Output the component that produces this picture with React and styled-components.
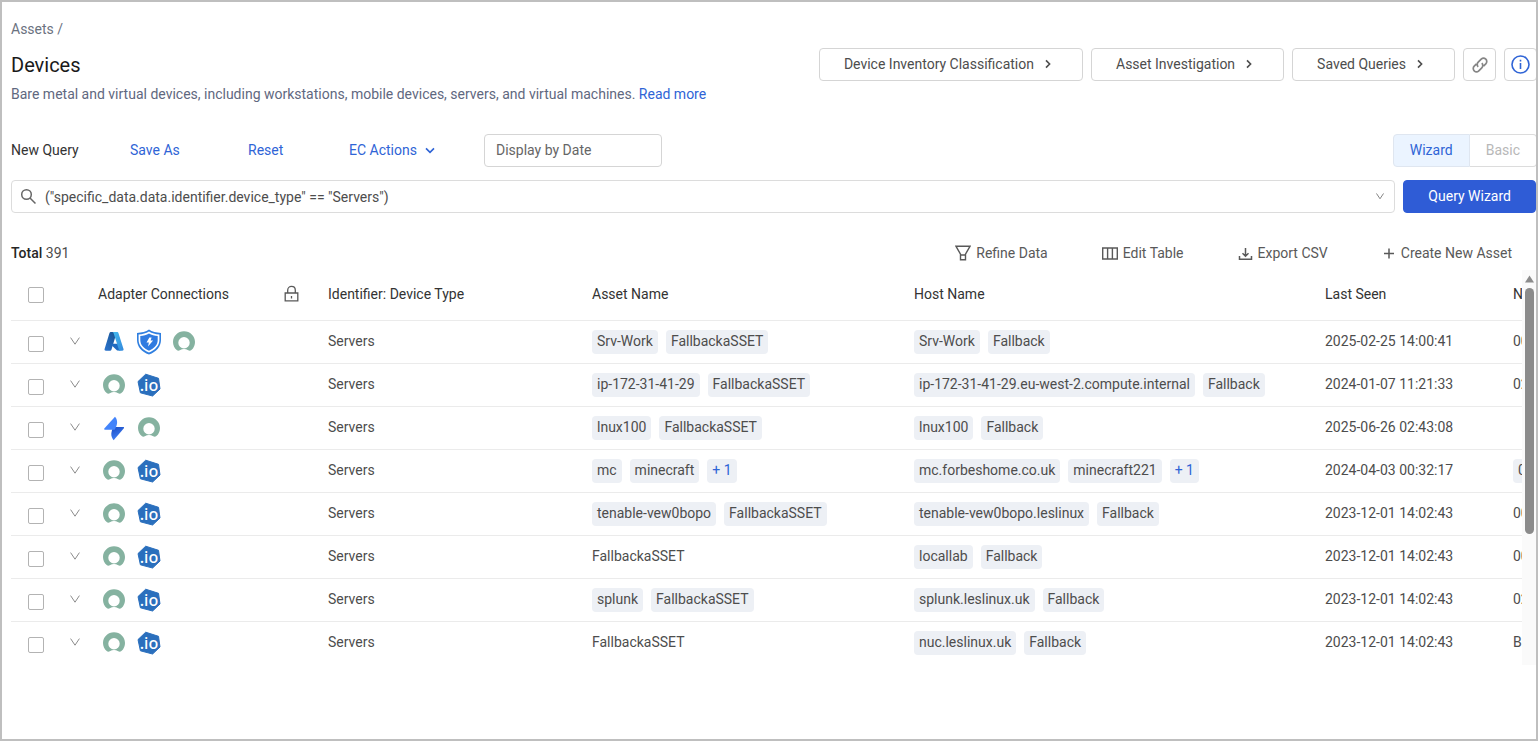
import React from "react";
import styled, { createGlobalStyle } from "styled-components";

const GlobalStyle = createGlobalStyle`
  * {
    box-sizing: border-box;
  }
  body {
    margin: 0;
    background: #ffffff;
    font-family: Roboto, "Open Sans", sans-serif;
    font-size: 14px;
    line-height: 20px;
    color: #4d4d4d;
  }
  button, input {
    font: inherit;
    color: inherit;
  }
`;

const columns = ["Adapter Connections", "Identifier: Device Type", "Asset Name", "Host Name", "Last Seen", "Network"];

const rows = [
  { adapters: ["azure", "shield", "ring"], asset: ["Srv-Work", "FallbackaSSET"], host: ["Srv-Work", "Fallback"], seen: "2025-02-25 14:00:41", mac: ["00:15"] },
  { adapters: ["ring", "io"], asset: ["ip-172-31-41-29", "FallbackaSSET"], host: ["ip-172-31-41-29.eu-west-2.compute.internal", "Fallback"], seen: "2024-01-07 11:21:33", mac: ["02:2A"] },
  { adapters: ["bolt", "ring"], asset: ["lnux100", "FallbackaSSET"], host: ["lnux100", "Fallback"], seen: "2025-06-26 02:43:08", mac: [] },
  { adapters: ["ring", "io"], asset: ["mc", "minecraft"], host: ["mc.forbeshome.co.uk", "minecraft221"], more: true, seen: "2024-04-03 00:32:17", mac: ["00:1B", "00:50"] },
  { adapters: ["ring", "io"], asset: ["tenable-vew0bopo", "FallbackaSSET"], host: ["tenable-vew0bopo.leslinux", "Fallback"], seen: "2023-12-01 14:02:43", mac: ["00:0C"] },
  { adapters: ["ring", "io"], asset: ["FallbackaSSET"], host: ["locallab", "Fallback"], seen: "2023-12-01 14:02:43", mac: ["00:0C"] },
  { adapters: ["ring", "io"], asset: ["splunk", "FallbackaSSET"], host: ["splunk.leslinux.uk", "Fallback"], seen: "2023-12-01 14:02:43", mac: ["02:42"] },
  { adapters: ["ring", "io"], asset: ["FallbackaSSET"], host: ["nuc.leslinux.uk", "Fallback"], seen: "2023-12-01 14:02:43", mac: ["B8:AE"] },
];

const Chevron = ({ right, size = 10, thick }) => (
  <svg width={size} height={size} viewBox="0 0 10 10" fill="none" stroke="currentColor" strokeWidth={thick ? 1.6 : 1} aria-hidden="true">
    <path d={right ? "M3 1.4 6.6 5 3 8.6" : thick ? "M1 3.4 5 7.4 9 3.4" : "M.6.6 5 7.2 9.4.6"} />
  </svg>
);

const AdapterIcon = ({ name }) => {
  if (name === "azure") {
    return (
      <svg width="26" height="26" viewBox="0 0 26 26" role="img" aria-label="Azure">
        <defs>
          <linearGradient id="azLeft" x1="1" y1="0" x2="0" y2="1">
            <stop offset="0" stopColor="#17528f" />
            <stop offset="1" stopColor="#2b74cf" />
          </linearGradient>
          <linearGradient id="azRight" x1="0" y1="0" x2="1" y2="1">
            <stop offset="0" stopColor="#45bcf0" />
            <stop offset="1" stopColor="#3389dc" />
          </linearGradient>
        </defs>
        <path d="M9.8 3h6L10.6 20.2c-.3 1-1 1.6-2 1.600H4.900c-1 0-1.600-.8-1.300-1.700L8.400 4.200C8.700 3.400 9.100 3 9.800 3z" fill="url(#azLeft)" />
        <path d="M9 14.800h8.500l2 6.800h-3.400z" fill="#1f6ac0" />
        <path d="M11.4 3h4.600c.8 0 1.300.5 1.500 1.200l5 15.900c.3.900-.3 1.700-1.300 1.700h-4.400c.8-.1 1.300-.8 1-1.600L12.700 4.400c-.2-.8-.6-1.300-1.300-1.400z" fill="url(#azRight)" />
      </svg>
    );
  }
  if (name === "shield") {
    return (
      <svg width="26" height="26" viewBox="0 0 26 26" role="img" aria-label="Defender">
        <path d="M13 .6C16 2.700 20.500 3.900 25 4V11c0 6.500-4.500 11.700-12 14.600C5.500 22.700 1 17.500 1 11V4C5.500 3.900 10 2.700 13 .6z" fill="#2f7fe0" />
        <path d="M13 2.600c2.900 1.800 6.300 2.800 10.400 3v5.400c0 5.600-4.100 9.900-10.400 12.500C6.700 20.900 2.600 16.600 2.600 11V5.600c4.100-.2 7.500-1.200 10.400-3z" fill="#fff" />
        <path d="M13 4.400c2.500 1.500 5.500 2.400 8.700 2.700V11c0 4.800-3.400 8.500-8.700 10.700C7.700 19.500 4.300 15.800 4.300 11V7.100C7.500 6.800 10.500 5.900 13 4.400z" fill="#2f7be0" />
        <path d="M13.400 8.600h2.200l-1 2.900h2.500l-5.100 5.900.9-4h-2.400z" fill="#fff" />
      </svg>
    );
  }
  if (name === "bolt") {
    return (
      <svg width="26" height="26" viewBox="0 0 26 26" role="img" aria-label="Jira Service Management">
        <defs>
          <linearGradient id="boltLow" x1="0.2" y1="0" x2="0.6" y2="1">
            <stop offset="0" stopColor="#1d4fc6" />
            <stop offset="1" stopColor="#4486fb" />
          </linearGradient>
        </defs>
        <path d="M22.300 12.100c.7 0 1 .7.6 1.200L12.600 25.200c-3-3.500-3-7.500-.3-13.100z" fill="url(#boltLow)" />
        <path d="M3.900 14.700c-.7 0-1-.7-.6-1.200L14 1.700c3 3.500 2.700 7.500-.3 13z" fill="#4384fb" />
      </svg>
    );
  }
  if (name === "io") {
    return (
      <svg width="26" height="26" viewBox="0 0 26 26" role="img" aria-label="Tenable.io">
        <path d="M9.7 2.200 22.500 6.300 24 17 16.600 24 4.400 20.800 2 9.600z" fill="#2a6fbd" stroke="#2a6fbd" strokeLinejoin="round" />
        <text x="13" y="19" textAnchor="middle" fontFamily="Noto Sans, Open Sans, sans-serif" fontSize="16" fontWeight="500" fill="#fff">.io</text>
      </svg>
    );
  }
  return (
    <svg width="26" height="26" viewBox="0 0 26 26" role="img" aria-label="ServiceNow">
      <path d="M13 2.200C6.900 2.200 2 7 2 13c0 3.200 1.400 6.100 3.700 8.100.9.800 2.200.8 3.100.2a7.500 7.500 0 0 1 8.400 0c1 .7 2.300.6 3.200-.2A10.800 10.800 0 0 0 24 13c0-6-4.900-10.800-11-10.800zm0 17.200a5.700 5.700 0 1 1 0-11.400 5.700 5.700 0 0 1 0 11.400z" fill="#85b2a0" />
    </svg>
  );
};

const Page = styled.div`
  display: flex;
  flex-direction: column;
  min-height: 100vh;
  padding-left: 9px;
  border: 2px solid #bfbfbf;
  overflow: hidden;
`;

const Breadcrumb = styled.nav`
  padding-top: 17px;
  color: #6b7280;
  a {
    color: inherit;
    text-decoration: none;
  }
`;

const Header = styled.header`
  display: flex;
  justify-content: space-between;
  align-items: flex-start;
  margin-top: 9px;
`;

const Title = styled.h1`
  margin: 5px 0 7px;
  font-size: 20px;
  font-weight: 400;
  line-height: 24px;
  color: #1a1a1a;
`;

const Description = styled.p`
  margin: 0;
  color: #5f6880;
`;

const Link = styled.a`
  color: #2f64d6;
  text-decoration: none;
`;

const HeaderActions = styled.div`
  display: flex;
  gap: 8px;
  margin-right: -1px;
`;

const OutlineButton = styled.button`
  display: flex;
  align-items: center;
  justify-content: center;
  gap: 9px;
  height: 33px;
  padding: ${(props) => (props.$icon ? "0" : "0 29px 2px 24px")};
  width: ${(props) => (props.$icon ? "33px" : "auto")};
  border: 1px solid #d5d5d5;
  border-radius: 4px;
  background: #fff;
  color: ${(props) => (props.$blue ? "#2f64d6" : "#4d4d4d")};
  white-space: nowrap;
`;

const QueryBar = styled.div`
  display: flex;
  align-items: center;
  margin-top: 30px;
`;

const QueryName = styled.span`
  width: 119px;
  padding-bottom: 2px;
  color: #333;
`;

const TextButton = styled.button`
  display: flex;
  align-items: center;
  gap: 8px;
  width: ${(props) => props.$width}px;
  padding: 0 0 2px;
  border: 0;
  background: none;
  color: #2f64d6;
  text-align: left;
`;

const DateInput = styled.input`
  width: 178px;
  height: 33px;
  padding: 0 11px 2px;
  border: 1px solid #d5d5d5;
  border-radius: 4px;
  outline: none;
  &::placeholder {
    color: #666;
    opacity: 1;
  }
`;

const Toggle = styled.div`
  display: flex;
  margin-left: auto;
  margin-right: -1px;
`;

const ToggleButton = styled.button`
  height: 33px;
  padding: 0 16px 2px;
  border: 1px solid ${(props) => (props.$active ? "#dfe6f0" : "#dcdcdc")};
  border-left-width: ${(props) => (props.$active ? "1px" : "0")};
  border-radius: ${(props) => (props.$active ? "4px 0 0 4px" : "0 4px 4px 0")};
  background: ${(props) => (props.$active ? "#ebf4ff" : "#fff")};
  color: ${(props) => (props.$active ? "#2f64d6" : "#b8b8b8")};
`;

const SearchRow = styled.div`
  display: flex;
  gap: 8px;
  margin-top: 13px;
`;

const SearchBox = styled.label`
  display: flex;
  flex: 1;
  align-items: center;
  gap: 8px;
  height: 33px;
  padding: 0 10px 0 8px;
  border: 1px solid #dcdcdc;
  border-radius: 4px;
  color: #666;
`;

const SearchInput = styled.input`
  flex: 1;
  padding: 0;
  border: 0;
  outline: none;
  color: #4d4d4d;
`;

const PrimaryButton = styled.button`
  height: 33px;
  padding: 0 24px 2px;
  border: 1px solid #2f5cd6;
  border-radius: 4px;
  background: #2f5cd6;
  color: #fff;
`;

const TableBar = styled.div`
  display: flex;
  align-items: center;
  justify-content: space-between;
  margin-top: 30px;
  padding-right: 24px;
`;

const Total = styled.div`
  b {
    font-weight: 500;
    color: #262626;
  }
`;

const Tools = styled.div`
  display: flex;
  gap: 54px;
`;

const ToolButton = styled.button`
  display: flex;
  align-items: center;
  gap: 5px;
  padding: 0;
  border: 0;
  background: none;
  color: #595959;
`;

const TableArea = styled.div`
  display: flex;
  margin-top: 7px;
`;

const TableClip = styled.div`
  flex: 1;
  min-width: 0;
  overflow: hidden;
`;

const Table = styled.table`
  width: calc(100% + 191px);
  table-layout: fixed;
  border-collapse: separate;
  border-spacing: 0;
`;

const Col = styled.col`
  width: ${(props) => (props.$width ? `${props.$width}px` : "auto")};
`;

const Th = styled.th`
  height: 51px;
  padding: 0 0 3px;
  border-bottom: 1px solid #ebebeb;
  font-weight: 400;
  color: #333;
  text-align: left;
  white-space: nowrap;
  svg {
    display: block;
  }
`;

const Td = styled.td`
  height: 43px;
  padding: 0;
  border-bottom: 1px solid ${(props) => (props.$last ? "transparent" : "#ebebeb")};
  white-space: nowrap;
  svg {
    display: block;
  }
`;

const Value = styled.span`
  display: block;
  padding-bottom: 2px;
`;

const Checkbox = styled.input`
  display: block;
  appearance: none;
  width: 16px;
  height: 16px;
  margin: 3px 0 0 17px;
  border: 1px solid #b3b3b3;
  border-radius: 2px;
  background: #fff;
`;

const ExpandButton = styled.button`
  display: block;
  padding: 0;
  border: 0;
  background: none;
  color: #8c8c8c;
`;

const AdapterList = styled.div`
  display: flex;
  gap: 9px;
  padding-left: 3px;
`;

const TagList = styled.div`
  display: flex;
  gap: 8px;
`;

const Tag = styled.span`
  padding: 1px 5px 3px;
  border-radius: 4px;
  background: #edf0f5;
  color: ${(props) => (props.$more ? "#2f64d6" : "inherit")};
`;

const ScrollTrack = styled.div`
  display: flex;
  flex-direction: column;
  align-items: center;
  width: 14px;
  padding-top: 5px;
  background: #fafafa;
`;

const ScrollThumb = styled.div`
  width: 9px;
  height: 63%;
  margin-top: 5px;
  border-radius: 5px;
  background: #8b8b8b;
`;

const Tags = ({ items, more }) => {
  if (items.length < 2) return <Value>{items[0]}</Value>;
  return (
    <TagList>
      {items.map((item) => (
        <Tag key={item}>{item}</Tag>
      ))}
      {more && <Tag $more>+ 1</Tag>}
    </TagList>
  );
};

// a lone host or asset is plain text, several become tags
function App() {
  return (
    <>
      <GlobalStyle />
      <Page>
        <Breadcrumb>
          <a href="#assets">Assets</a> /
        </Breadcrumb>
        <Header>
          <div>
            <Title>Devices</Title>
            <Description>
              Bare metal and virtual devices, including workstations, mobile devices, servers, and virtual machines. <Link href="#more">Read more</Link>
            </Description>
          </div>
          <HeaderActions>
            {["Device Inventory Classification", "Asset Investigation", "Saved Queries"].map((label) => (
              <OutlineButton key={label}>
                {label}
                <Chevron right thick />
              </OutlineButton>
            ))}
            <OutlineButton $icon aria-label="Copy link">
              <svg width="18" height="18" viewBox="0 0 18 18" fill="none" stroke="#858585" strokeWidth="1.7">
                <path d="M7.200 10.800a3.200 3.200 0 0 1 0-4.600l3-3a3.200 3.200 0 0 1 4.600 4.600l-2.300 2.300M10.800 7.200a3.200 3.200 0 0 1 0 4.600l-3 3a3.200 3.200 0 0 1-4.600-4.600l2.300-2.300" />
              </svg>
            </OutlineButton>
            <OutlineButton $icon $blue aria-label="Information">
              <svg width="19" height="19" viewBox="0 0 19 19" fill="none" stroke="currentColor" strokeWidth="1.6">
                <circle cx="9.5" cy="9.5" r="8.5" />
                <path d="M9.5 8v6M9.5 4.800v1.800" />
              </svg>
            </OutlineButton>
          </HeaderActions>
        </Header>

        <QueryBar>
          <QueryName>New Query</QueryName>
          <TextButton $width={118}>Save As</TextButton>
          <TextButton $width={101}>Reset</TextButton>
          <TextButton $width={135}>
            EC Actions
            <Chevron thick />
          </TextButton>
          <DateInput aria-label="Display by Date" placeholder="Display by Date" />
          <Toggle>
            <ToggleButton $active>Wizard</ToggleButton>
            <ToggleButton>Basic</ToggleButton>
          </Toggle>
        </QueryBar>

        <SearchRow>
          <SearchBox>
            <svg width="17" height="17" viewBox="0 0 17 17" fill="none" stroke="currentColor" strokeWidth="1.5" aria-hidden="true">
              <circle cx="6.500" cy="6.500" r="4.800" />
              <path d="m10 10 5.500 5.500" />
            </svg>
            <SearchInput aria-label="Query" defaultValue={'("specific_data.data.identifier.device_type" == "Servers")'} />
            <Chevron size={8} />
          </SearchBox>
          <PrimaryButton>Query Wizard</PrimaryButton>
        </SearchRow>

        <TableBar>
          <Total>
            <b>Total</b> 391
          </Total>
          <Tools>
            <ToolButton>
              <svg width="16" height="16" viewBox="0 0 16 16" fill="none" stroke="currentColor" strokeWidth="1.4">
                <path d="M.9 1.200h14.200l-4.600 8v5.600h-5V9.200zM5.500 10h5" />
              </svg>
              Refine Data
            </ToolButton>
            <ToolButton>
              <svg width="16" height="16" viewBox="0 0 16 16" fill="none" stroke="currentColor" strokeWidth="1.4">
                <path d="M.7 3h14.600v11H.7zM5.600 3v11M10.400 3v11" />
              </svg>
              Edit Table
            </ToolButton>
            <ToolButton>
              <svg width="15" height="16" viewBox="0 0 15 16" fill="none" stroke="currentColor" strokeWidth="1.5">
                <path d="M7.500 3v8M4.500 8.200l3 3 3-3M1.500 11v3.300h12V11" />
              </svg>
              Export CSV
            </ToolButton>
            <ToolButton>
              <svg width="14" height="14" viewBox="0 0 14 14" fill="none" stroke="currentColor" strokeWidth="1.5">
                <path d="M7 2.500v10M2 7.500h10" />
              </svg>
              Create New Asset
            </ToolButton>
          </Tools>
        </TableBar>

        <TableArea>
          <TableClip>
            <Table>
              <colgroup>
                <Col $width={59} />
                <Col $width={28} />
                <Col $width={186} />
                <Col $width={44} />
                <Col $width={264} />
                <Col $width={322} />
                <Col />
                <Col $width={188} />
                <Col $width={200} />
              </colgroup>
              <thead>
                <tr>
                  <Th>
                    <Checkbox type="checkbox" aria-label="Select all" />
                  </Th>
                  <Th />
                  <Th>{columns[0]}</Th>
                  <Th>
                    <svg width="15" height="17" viewBox="0 0 15 17" fill="none" stroke="#595959" strokeWidth="1.3" role="img" aria-label="Locked">
                      <path d="M1.200 8h12.600v7.800H1.200zM3.700 8V5.200c0-5 7.600-5 7.600 0V8M7.500 11v2.400" />
                    </svg>
                  </Th>
                  {columns.slice(1).map((name) => (
                    <Th key={name}>{name}</Th>
                  ))}
                </tr>
              </thead>
              <tbody>
                {rows.map((row, index) => {
                  const last = index === rows.length - 1;
                  return (
                    <tr key={index}>
                      <Td $last={last}>
                        <Checkbox type="checkbox" aria-label={`Select ${row.host[0]}`} />
                      </Td>
                      <Td $last={last}>
                        <ExpandButton aria-label="Expand row">
                          <Chevron size={10} />
                        </ExpandButton>
                      </Td>
                      <Td $last={last}>
                        <AdapterList>
                          {row.adapters.map((name) => (
                            <AdapterIcon key={name} name={name} />
                          ))}
                        </AdapterList>
                      </Td>
                      <Td $last={last} />
                      <Td $last={last}>
                        <Value>Servers</Value>
                      </Td>
                      <Td $last={last}>
                        <Tags items={row.asset} more={row.more} />
                      </Td>
                      <Td $last={last}>
                        <Tags items={row.host} more={row.more} />
                      </Td>
                      <Td $last={last}>
                        <Value>{row.seen}</Value>
                      </Td>
                      <Td $last={last}>
                        <Tags items={row.mac} />
                      </Td>
                    </tr>
                  );
                })}
              </tbody>
            </Table>
          </TableClip>
          <ScrollTrack>
            <svg width="9" height="8" viewBox="0 0 9 8" aria-hidden="true">
              <path d="M4.500.5 9 7.500H0z" fill="#8b8b8b" />
            </svg>
            <ScrollThumb />
          </ScrollTrack>
        </TableArea>
      </Page>
    </>
  );
}

export default App;
